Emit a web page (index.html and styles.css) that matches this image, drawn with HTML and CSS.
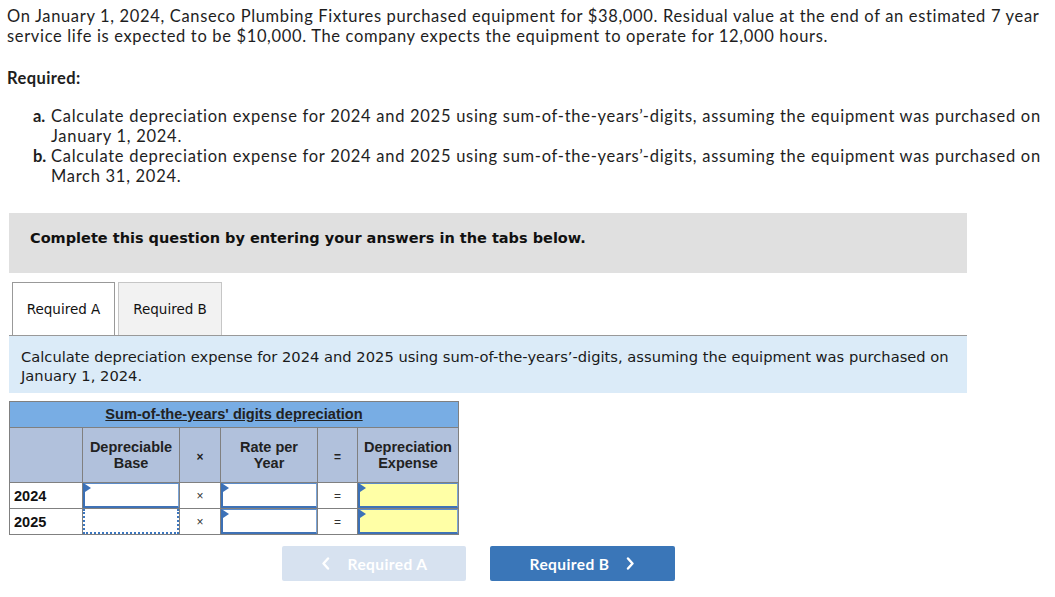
FILE: index.html
```html
<!DOCTYPE html>
<html>
<head>
<meta charset="utf-8">
<link rel="stylesheet" href="styles.css">
</head>
<body>
<div class="page">
  <p class="intro">On January 1, 2024, Canseco Plumbing Fixtures purchased equipment for $38,000. Residual value at the end of an estimated 7 year service life is expected to be $10,000. The company expects the equipment to operate for 12,000 hours.</p>
  <p class="req-label">Required:</p>
  <ul class="req-list">
    <li><span class="marker">a.</span><span class="item-text">Calculate depreciation expense for 2024 and 2025 using sum-of-the-years’-digits, assuming the equipment was purchased on January 1, 2024.</span></li>
    <li><span class="marker">b.</span><span class="item-text">Calculate depreciation expense for 2024 and 2025 using sum-of-the-years’-digits, assuming the equipment was purchased on March 31, 2024.</span></li>
  </ul>

  <div class="instructions">Complete this question by entering your answers in the tabs below.</div>

  <div class="tabs">
    <div class="tab active">Required A</div>
    <div class="tab">Required B</div>
  </div>

  <div class="panel">
    <div class="prompt">Calculate depreciation expense for 2024 and 2025 using sum-of-the-years’-digits, assuming the equipment was purchased on January 1, 2024.</div>

    <table class="grid">
      <colgroup>
        <col class="c-year"><col class="c-base"><col class="c-op"><col class="c-rate"><col class="c-eq"><col class="c-exp">
      </colgroup>
      <thead>
        <tr class="title-row"><th colspan="6"><span class="title">Sum-of-the-years' digits depreciation</span></th></tr>
        <tr class="head-row">
          <th></th>
          <th>Depreciable<br>Base</th>
          <th class="op-head">×</th>
          <th>Rate per<br>Year</th>
          <th class="op-head">=</th>
          <th>Depreciation<br>Expense</th>
        </tr>
      </thead>
      <tbody>
        <tr>
          <td class="year">2024</td>
          <td class="cell"><div class="input"></div></td>
          <td class="op">×</td>
          <td class="cell"><div class="input"></div></td>
          <td class="op">=</td>
          <td class="cell"><div class="input yellow"></div></td>
        </tr>
        <tr>
          <td class="year">2025</td>
          <td class="cell"><div class="input dotted"></div></td>
          <td class="op">×</td>
          <td class="cell"><div class="input"></div></td>
          <td class="op">=</td>
          <td class="cell"><div class="input yellow"></div></td>
        </tr>
      </tbody>
    </table>

    <div class="nav">
      <button class="btn prev"><svg class="chev left" width="9" height="13" viewBox="0 0 9 13"><path d="M7 1.5 L2.5 6.5 L7 11.5" fill="none" stroke="#ffffff" stroke-width="2.4" stroke-linecap="round" stroke-linejoin="round"/></svg>Required A</button>
      <button class="btn next">Required B<svg class="chev right" width="9" height="13" viewBox="0 0 9 13"><path d="M2 1.5 L6.5 6.5 L2 11.5" fill="none" stroke="#ffffff" stroke-width="2.4" stroke-linecap="round" stroke-linejoin="round"/></svg></button>
    </div>
  </div>
</div>
</body>
</html>
```

FILE: styles.css
```css
* { box-sizing: border-box; }

html, body {
  margin: 0;
  padding: 0;
  background: #ffffff;
}

.page {
  padding: 6px 0 0 7px;
  width: 1055px;
  font-family: Lato, "Open Sans", sans-serif;
  color: #1e1e1e;
}

.intro {
  margin: 0;
  font-size: 16.5px;
  line-height: 20px;
  letter-spacing: 0.66px;
  width: 1046px;
}

.req-label {
  margin: 22px 0 0 0;
  font-size: 16.5px;
  line-height: 20px;
  font-weight: 700;
  letter-spacing: 0.4px;
}

.req-list {
  list-style: none;
  margin: 18px 0 0 0;
  padding: 0 0 0 26px;
}

.req-list li {
  display: flex;
  font-size: 16.5px;
  line-height: 20px;
  letter-spacing: 0.72px;
}

.marker {
  flex: 0 0 18px;
  font-weight: 700;
  letter-spacing: 0;
}

.item-text {
  flex: 0 0 1000px;
}

.instructions {
  margin: 27px 0 0 2px;
  width: 958px;
  height: 60px;
  background: #e0e0e0;
  padding: 16px 21px 0 21px;
  font-family: Verdana, "DejaVu Sans", sans-serif;
  font-weight: 700;
  font-size: 14.5px;
  line-height: 18px;
  color: #111111;
}

.tabs {
  display: flex;
  gap: 3px;
  margin: 9px 0 0 5px;
  height: 53px;
}

.tab {
  width: 104px;
  height: 53px;
  display: flex;
  align-items: center;
  justify-content: center;
  border: 1px solid #c6c6c6;
  border-bottom: none;
  background: #f2f2f2;
  font-family: Tahoma, "DejaVu Sans", sans-serif;
  font-size: 13.5px;
  color: #111111;
}

.tab.active {
  width: 103px;
  background: #ffffff;
  border-color: #999999;
}

.panel {
  margin-left: 2px;
  width: 958px;
}

.prompt {
  border-top: 1px solid #999999;
  background: #dbebf8;
  padding: 11px 12px 8px 12px;
  font-family: Verdana, "DejaVu Sans", sans-serif;
  font-size: 14.7px;
  line-height: 19px;
  color: #1a1a1a;
  height: 58px;
}

.grid {
  margin-top: 8px;
  border-collapse: collapse;
  width: 450px;
  table-layout: fixed;
  font-family: Arial, "Liberation Sans", sans-serif;
  border: 1px solid #808080;
}

.c-year { width: 73px; }
.c-base { width: 97px; }
.c-op { width: 41px; }
.c-rate { width: 97px; }
.c-eq { width: 40px; }
.c-exp { width: 101px; }

.grid th, .grid td {
  border: 1px solid #808080;
  padding: 0;
}

.title-row th {
  height: 26px;
  background: #78ade4;
  text-align: center;
  font-size: 14.6px;
  font-weight: 700;
  color: #222222;
  padding-bottom: 1px;
}

.title {
  text-decoration: underline;
}

.head-row th {
  height: 55px;
  background: #b1c1dc;
  font-size: 14.5px;
  font-weight: 700;
  line-height: 16px;
  color: #222222;
  text-align: center;
  vertical-align: middle;
  padding-bottom: 1px;
}

.head-row th.op-head {
  font-size: 12px;
  padding-top: 4px;
}

.grid tbody td {
  height: 26px;
  background: #ffffff;
}

.year {
  font-size: 14.5px;
  font-weight: 700;
  padding-left: 4px !important;
  color: #111111;
}

.op {
  text-align: center;
  font-size: 12px;
  color: #333333;
}

.cell {
  position: relative;
}

.input {
  position: relative;
  height: 25px;
  background: #ffffff;
  border: 1px solid #7aa4d8;
  border-left: 2px solid #3b70b6;
  border-top: 1px solid #5c8cca;
  border-bottom: 2px solid #3f72b6;
}

.input::before {
  content: "";
  position: absolute;
  left: 0;
  top: 0;
  border-top: 4px solid transparent;
  border-bottom: 4px solid transparent;
  border-left: 6px solid #3d72b8;
}

.input.yellow {
  background: #ffffa6;
}

.input.dotted {
  border: 2px dotted #3b76bf;
  border-top: none;
  height: 25px;
}

.input.dotted::before {
  display: none;
}

.nav {
  display: flex;
  gap: 24px;
  margin: 11px 0 0 273px;
}

.btn {
  width: 184px;
  height: 35px;
  border: none;
  border-radius: 2px;
  font-family: Lato, "Open Sans", sans-serif;
  font-weight: 700;
  font-size: 15.5px;
  letter-spacing: 0.4px;
  color: #ffffff;
  display: flex;
  align-items: center;
  justify-content: center;
  padding: 0;
}

.btn.prev {
  background: #d7e2f0;
}

.btn.next {
  width: 185px;
  background: #3a76b8;
}

.chev.left { margin-right: 18px; }
.chev.right { margin-left: 17px; }
```
